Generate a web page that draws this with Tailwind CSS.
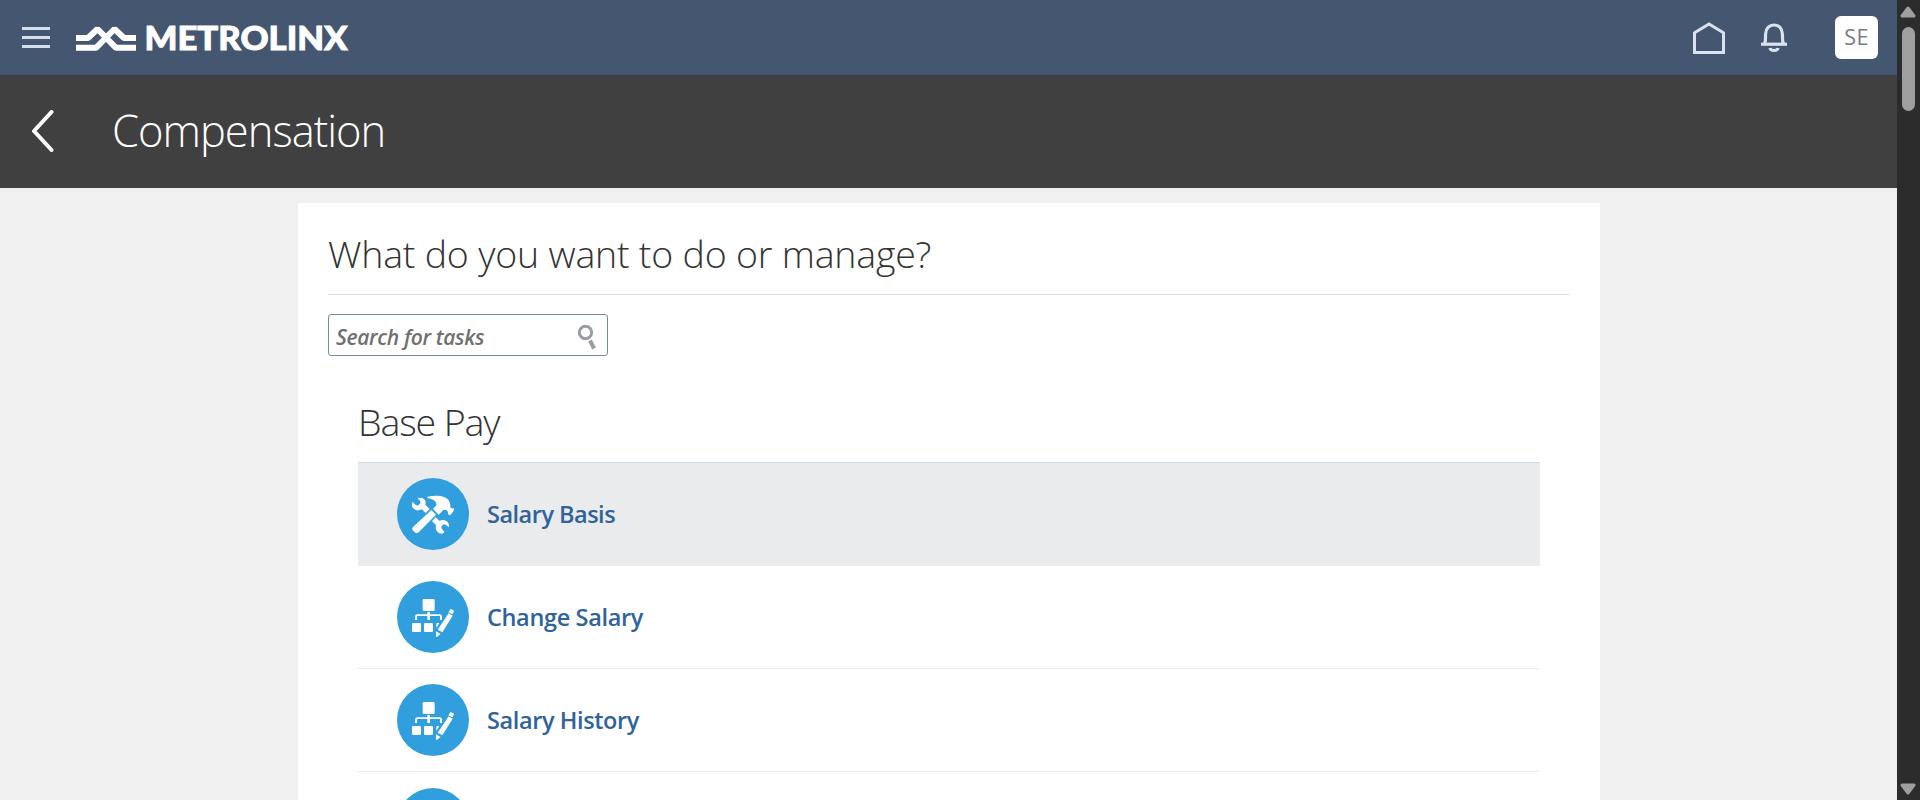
<!DOCTYPE html>
<html lang="en">
<head>
<meta charset="utf-8">
<title>Compensation</title>
<script src="https://cdn.jsdelivr.net/npm/@tailwindcss/browser@4"></script>
</head>
<body class="bg-[#f0f0f0] font-['Open_Sans','Noto_Sans',sans-serif]">
<svg class="hidden" xmlns="http://www.w3.org/2000/svg">
  <symbol id="org" viewBox="21 18 216 216">
    <circle cx="129" cy="126" r="108" fill="#319fdd"/>
    <g fill="#fff">
      <rect x="98" y="72" width="36" height="36" rx="4"/>
      <rect x="66" y="144" width="27" height="27" rx="4"/>
      <rect x="102" y="144" width="27" height="27" rx="4"/>
      <path d="M142 144H148L139 159V147Q139 144 142 144Z"/>
      <path d="M176 115L188 122L157 172L143 164Z"/>
      <path d="M180 104Q182 102 184 103L190 106Q193 108 191 111L187 118L175 112Z"/>
      <path d="M138 169L152 177L141 185Q138 187 138 184Z"/>
    </g>
    <path d="M78 135V124Q78 120.500 82 120.500H149Q153 120.500 153 124V135" fill="none" stroke="#fff" stroke-width="5.5"/>
    <path d="M116 111V135" transform="translate(0 0)" fill="none" stroke="#fff" stroke-width="8"/>
  </symbol>
</svg>

<div class="flex h-[800px] w-[1920px] overflow-hidden">
<div class="flex h-[800px] w-[1897px] flex-col overflow-hidden">
  <header class="flex h-[75px] shrink-0 items-center bg-[#455670] pl-[22px] pr-[19px]">
    <svg class="h-[23px] w-7" viewBox="0 0 28 23" stroke="#d5dfec" stroke-width="3"><path d="M0 2.5H28M0 11.5H28M0 20.5H28"/></svg>
    <svg class="ml-6 h-[34px] w-[280px] overflow-visible" viewBox="74 20 280 34">
      <g fill="none" stroke="#fff" stroke-width="6" stroke-linejoin="bevel">
        <path d="M76 37H88L97.5 28L116 46.800H136"/>
        <path d="M76 46.800H96L114.5 28L124 37H136"/>
      </g>
      <text x="144.500" y="48.800" textLength="203" lengthAdjust="spacingAndGlyphs" fill="#fff" stroke="#fff" stroke-width="0.9" font-family="Lato" font-weight="900" font-size="32.5">METROLINX</text>
    </svg>
    <div class="ml-auto flex items-center">
      <svg class="h-8 w-8" viewBox="0 0 32 32" fill="none" stroke="#d9e3f0" stroke-width="3"><path d="M1.5 30.5V10.8L16 2L30.5 10.8V30.5Z"/></svg>
      <svg class="ml-9 h-[30px] w-[26px]" viewBox="0 0 26 30" fill="none" stroke="#d9e3f0" stroke-width="3.2"><path d="M0 21.2H26"/><path d="M3.5 21C5 18 4.3 15 4.6 11C5 5 8.500 2 13 2S21 5 21.400 11C21.700 15 21 18 22.500 21"/><path d="M9 25Q9.500 27.500 13 27.500T17 25"/></svg>
      <div class="ml-12 flex h-[43px] w-[43px] items-center justify-center rounded-[6px] bg-white text-[21.500px] tracking-[0.3px] text-[#7b7b7b]">SE</div>
    </div>
  </header>

  <div class="flex h-[113px] shrink-0 items-center bg-[#404040] pb-0.5 pl-[31px]">
    <svg class="h-[42px] w-6" viewBox="0 0 24 42" fill="none" stroke="#fff" stroke-width="4" stroke-linecap="round" stroke-linejoin="round"><path d="M20.500 2L3 21L20.500 40"/></svg>
    <h1 class="ml-[57px] whitespace-nowrap text-[43.500px] font-light leading-[60px] tracking-[-1px] text-white">Compensation</h1>
  </div>

  <main class="ml-[298px] mt-[15px] w-[1302px] grow bg-white px-[30px] pt-[23px]">
    <h2 class="h-[68px] whitespace-nowrap text-[37.500px] font-light leading-[56px] tracking-[-0.2px] text-[#333]">What do you want to do or manage?</h2>
    <div class="h-px bg-[#d6dfe6]"></div>
    <div class="mt-[19px] flex h-[42px] w-[280px] items-center rounded-[3px] border border-[#758e9f] pl-[7px] pr-[10px]">
      <span class="grow whitespace-nowrap pt-1 text-[21px] font-semibold italic leading-7 tracking-[-0.35px] text-[#707070]">Search for tasks</span>
      <svg class="mt-1 h-[26px] w-[20px]" viewBox="0 0 20 26" fill="none" stroke="#999da1"><circle cx="8.500" cy="8.500" r="6.2" stroke-width="3"/><path d="M13 16.500L17 24.500" stroke-width="4"/></svg>
    </div>
    <section class="mx-[30px] mt-[38px]">
      <h3 class="h-[68px] whitespace-nowrap text-[37.500px] font-light leading-[56px] tracking-[-1.1px] text-[#333]">Base Pay</h3>
      <ul class="border-t border-[#d2dce4] text-[23.500px] font-semibold text-[#2f639b]">
        <li class="flex h-[103px] items-center bg-[#e9ebed] pl-[39px] pb-px">
          <svg class="h-[72px] w-[72px]" viewBox="21 24 216 216">
            <circle cx="129" cy="132" r="108" fill="#319fdd"/>
            <g fill="#fff">
              <path d="M83 84Q100 81 106 92Q108 98 106 104L119 117L107 129L95 118Q80 126 70 115Q63 107 67 95L77 105Q81 108 87 104Q93 100 91 94Z"/>
              <path d="M137 142L148 152Q164 147 173 156Q179 163 177 172L167 164Q162 161 157 166Q152 171 155 176L163 186Q160 194 148 190Q134 182 138 165L126 154Z"/>
              <path d="M112 80Q134 76 152 78Q168 81 176 91Q182 100 181 112L187 116L192 113V121L181 136L174 133V126Q170 117 160 120L146 134L129 117L140 104Q138 88 112 84Z"/>
              <path d="M124 120L138 134L86 187Q80 192 74 187L68 181Q64 177 69 171Z" stroke="#319fdd" stroke-width="3" paint-order="stroke"/>
            </g>
          </svg>
          <span class="ml-[18px] whitespace-nowrap pt-0.5 tracking-[-0.5px]">Salary Basis</span>
        </li>
        <li class="flex h-[103px] items-center border-b border-[#ebebeb] pl-[39px]">
          <svg class="h-[72px] w-[72px]"><use href="#org"/></svg>
          <span class="ml-[18px] whitespace-nowrap pt-0.5 tracking-[-0.35px]">Change Salary</span>
        </li>
        <li class="flex h-[103px] items-center border-b border-[#ebebeb] pl-[39px]">
          <svg class="h-[72px] w-[72px]"><use href="#org"/></svg>
          <span class="ml-[18px] whitespace-nowrap pt-0.5 tracking-[-0.4px]">Salary History</span>
        </li>
        <li class="flex h-[103px] items-center pl-[39px]">
          <svg class="h-[72px] w-[72px]"><use href="#org"/></svg>
        </li>
      </ul>
    </section>
  </main>
</div>

<aside class="flex w-[23px] flex-col items-center bg-[#2c2c2c] pt-[6px] pb-[5px] pr-px">
  <svg class="h-3 w-4" viewBox="0 0 16 12" fill="#9f9f9f" stroke="#9f9f9f" stroke-width="3" stroke-linejoin="round"><path d="M8 2L14 10H2Z"/></svg>
  <div class="mt-[9px] h-[84px] w-[13px] rounded-full bg-[#9f9f9f]"></div>
  <svg class="mt-auto h-3 w-4" viewBox="0 0 16 12" fill="#9f9f9f" stroke="#9f9f9f" stroke-width="3" stroke-linejoin="round"><path d="M8 10L14 2H2Z"/></svg>
</aside>
</div>
</body>
</html>
